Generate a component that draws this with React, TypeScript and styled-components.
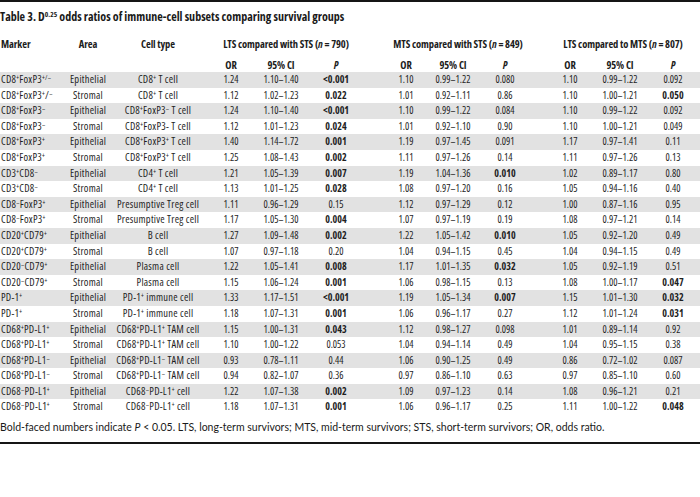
import React from "react";
import styled, { createGlobalStyle } from "styled-components";

const GlobalStyle = createGlobalStyle`
  html, body { margin: 0; padding: 0; background: #ffffff; }
  body { font-family: "Open Sans", "Liberation Sans", Arial, sans-serif; color: #1a1a1a; }
`;

const COLS = "62px 52px 88px 58px 42px 68px 72px 22px 82px 48px 52px 54px";
const SANS = `"Open Sans", "Liberation Sans", Arial, sans-serif`;

const Page = styled.div`
  width: 700px;
  display: flex;
  flex-direction: column;
`;

const Rule = styled.div<{ $top?: number }>`
  height: 2px;
  background: #151515;
  margin-top: ${(p) => p.$top ?? 0}px;
`;

const Title = styled.h1`
  margin: 7px 0 0 0;
  font-family: ${SANS};
  font-stretch: 77%;
  font-size: 12px;
  line-height: 15px;
  font-weight: 700;
  color: #1a1a1a;
  white-space: nowrap;
`;

const Table = styled.div`
  display: flex;
  flex-direction: column;
  margin-top: 13px;
  font-family: ${SANS};
  font-stretch: 75%;
`;

const HeadRow = styled.div<{ $height: number; $gap?: number }>`
  display: grid;
  grid-template-columns: ${COLS};
  height: ${(p) => p.$height}px;
  line-height: ${(p) => p.$height}px;
  margin-top: ${(p) => p.$gap ?? 0}px;
  font-size: 10.5px;
  font-weight: 700;
  letter-spacing: -0.1px;
  color: #1c1c1c;
`;

const Row = styled.div<{ $shaded: boolean }>`
  display: grid;
  grid-template-columns: ${COLS};
  height: 15.6px;
  line-height: 15.6px;
  font-size: 10px;
  background: ${(p) => (p.$shaded ? "#e2e2e2" : "transparent")};
  color: #1e1e1e;
`;

const Cell = styled.div<{ $left?: boolean; $bold?: boolean; $span?: number; $label?: boolean }>`
  display: flex;
  align-items: center;
  justify-content: ${(p) => (p.$left ? "flex-start" : "center")};
  padding-left: ${(p) => (p.$left ? "1px" : "0")};
  min-width: 0;
  white-space: nowrap;
  font-weight: ${(p) => (p.$bold ? 700 : "inherit")};
  grid-column: ${(p) => (p.$span ? `span ${p.$span}` : "auto")};
  ${(p) => (p.$label ? "font-size: 10.5px; letter-spacing: 0.25px;" : "")}
`;

const Text = styled.span`
  flex-shrink: 0;
`;

const Sup = styled.sup`
  font-size: 0.62em;
  line-height: 0;
  vertical-align: 0.5em;
`;

const Note = styled.p`
  margin: 4.5px 0 0 0;
  font-family: Lato, "Liberation Sans", sans-serif;
  font-size: 10.5px;
  line-height: 15px;
  color: #1a1a1a;
  white-space: nowrap;
`;

function Rich({ s }: { s: string }) {
  const parts = s.split(/(\^\{[^}]*\})/g).filter((x) => x.length > 0);
  return (
    <>
      {parts.map((p, i) =>
        p.startsWith("^{") ? <Sup key={i}>{p.slice(2, -1)}</Sup> : <React.Fragment key={i}>{p}</React.Fragment>
      )}
    </>
  );
}

type Stat = [string, string, string, boolean];
type DataRow = { marker: string; area: string; cell: string; stats: Stat[] };

const r = (
  marker: string,
  area: string,
  cell: string,
  a: Stat,
  b: Stat,
  c: Stat
): DataRow => ({ marker, area, cell, stats: [a, b, c] });

const ROWS: DataRow[] = [
  r("CD8^{+}FoxP3^{+/–}", "Epithelial", "CD8^{+} T cell", ["1.24", "1.10–1.40", "<0.001", true], ["1.10", "0.99–1.22", "0.080", false], ["1.10", "0.99–1.22", "0.092", false]),
  r("CD8^{+}FoxP3^{+}/^{–}", "Stromal", "CD8^{+} T cell", ["1.12", "1.02–1.23", "0.022", true], ["1.01", "0.92–1.11", "0.86", false], ["1.10", "1.00–1.21", "0.050", true]),
  r("CD8^{+}FoxP3^{–}", "Epithelial", "CD8^{+}FoxP3^{–} T cell", ["1.24", "1.10–1.40", "<0.001", true], ["1.10", "0.99–1.22", "0.084", false], ["1.10", "0.99–1.22", "0.092", false]),
  r("CD8^{+}FoxP3^{–}", "Stromal", "CD8^{+}FoxP3- T cell", ["1.12", "1.01–1.23", "0.024", true], ["1.01", "0.92–1.10", "0.90", false], ["1.10", "1.00–1.21", "0.049", false]),
  r("CD8^{+}FoxP3^{+}", "Epithelial", "CD8^{+}FoxP3^{+} T cell", ["1.40", "1.14–1.72", "0.001", true], ["1.19", "0.97–1.45", "0.091", false], ["1.17", "0.97–1.41", "0.11", false]),
  r("CD8^{+}FoxP3^{+}", "Stromal", "CD8^{+}FoxP3^{+} T cell", ["1.25", "1.08–1.43", "0.002", true], ["1.11", "0.97–1.26", "0.14", false], ["1.11", "0.97–1.26", "0.13", false]),
  r("CD3^{+}CD8^{–}", "Epithelial", "CD4^{+} T cell", ["1.21", "1.05–1.39", "0.007", true], ["1.19", "1.04–1.36", "0.010", true], ["1.02", "0.89–1.17", "0.80", false]),
  r("CD3^{+}CD8^{–}", "Stromal", "CD4^{+} T cell", ["1.13", "1.01–1.25", "0.028", true], ["1.08", "0.97–1.20", "0.16", false], ["1.05", "0.94–1.16", "0.40", false]),
  r("CD8^{–}FoxP3^{+}", "Epithelial", "Presumptive Treg cell", ["1.11", "0.96–1.29", "0.15", false], ["1.12", "0.97–1.29", "0.12", false], ["1.00", "0.87–1.16", "0.95", false]),
  r("CD8^{–}FoxP3^{+}", "Stromal", "Presumptive Treg cell", ["1.17", "1.05–1.30", "0.004", true], ["1.07", "0.97–1.19", "0.19", false], ["1.08", "0.97–1.21", "0.14", false]),
  r("CD20^{+}CD79^{+}", "Epithelial", "B cell", ["1.27", "1.09–1.48", "0.002", true], ["1.22", "1.05–1.42", "0.010", true], ["1.05", "0.92–1.20", "0.49", false]),
  r("CD20^{+}CD79^{+}", "Stromal", "B cell", ["1.07", "0.97–1.18", "0.20", false], ["1.04", "0.94–1.15", "0.45", false], ["1.04", "0.94–1.15", "0.49", false]),
  r("CD20^{–}CD79^{+}", "Epithelial", "Plasma cell", ["1.22", "1.05–1.41", "0.008", true], ["1.17", "1.01–1.35", "0.032", true], ["1.05", "0.92–1.19", "0.51", false]),
  r("CD20^{–}CD79^{+}", "Stromal", "Plasma cell", ["1.15", "1.06–1.24", "0.001", true], ["1.06", "0.98–1.15", "0.13", false], ["1.08", "1.00–1.17", "0.047", true]),
  r("PD-1^{+}", "Epithelial", "PD-1^{+} immune cell", ["1.33", "1.17–1.51", "<0.001", true], ["1.19", "1.05–1.34", "0.007", true], ["1.15", "1.01–1.30", "0.032", true]),
  r("PD-1^{+}", "Stromal", "PD-1^{+} immune cell", ["1.18", "1.07–1.31", "0.001", true], ["1.06", "0.96–1.17", "0.27", false], ["1.12", "1.01–1.24", "0.031", true]),
  r("CD68^{+}PD-L1^{+}", "Epithelial", "CD68^{+}PD-L1^{+} TAM cell", ["1.15", "1.00–1.31", "0.043", true], ["1.12", "0.98–1.27", "0.098", false], ["1.01", "0.89–1.14", "0.92", false]),
  r("CD68^{+}PD-L1^{+}", "Stromal", "CD68^{+}PD-L1^{+} TAM cell", ["1.10", "1.00–1.22", "0.053", false], ["1.04", "0.94–1.14", "0.49", false], ["1.04", "0.95–1.15", "0.38", false]),
  r("CD68^{+}PD-L1^{–}", "Epithelial", "CD68^{+}PD-L1^{–} TAM cell", ["0.93", "0.78–1.11", "0.44", false], ["1.06", "0.90–1.25", "0.49", false], ["0.86", "0.72–1.02", "0.087", false]),
  r("CD68^{+}PD-L1^{–}", "Stromal", "CD68^{+}PD-L1^{–} TAM cell", ["0.94", "0.82–1.07", "0.36", false], ["0.97", "0.86–1.10", "0.63", false], ["0.97", "0.85–1.10", "0.60", false]),
  r("CD68^{–}PD-L1^{+}", "Epithelial", "CD68^{–}PD-L1^{+} cell", ["1.22", "1.07–1.38", "0.002", true], ["1.09", "0.97–1.23", "0.14", false], ["1.08", "0.96–1.21", "0.21", false]),
  r("CD68^{–}PD-L1^{+}", "Stromal", "CD68^{–}PD-L1^{+} cell", ["1.18", "1.07–1.31", "0.001", true], ["1.06", "0.96–1.17", "0.25", false], ["1.11", "1.00–1.22", "0.048", true]),
];

const GROUPS: [string, string][] = [
  ["LTS compared with STS", "790"],
  ["MTS compared with STS", "849"],
  ["LTS compared to MTS", "807"],
];

export default function App() {
  return (
    <>
      <GlobalStyle />
      <Page>
        <Rule />
        <Title>
          Table 3. D<Sup>0.25</Sup> odds ratios of immune-cell subsets comparing survival groups
        </Title>
        <Table>
          <HeadRow $height={15}>
            <Cell $left>
              <Text>Marker</Text>
            </Cell>
            <Cell>
              <Text>Area</Text>
            </Cell>
            <Cell>
              <Text>Cell type</Text>
            </Cell>
            {GROUPS.map(([label, n]) => (
              <Cell key={label} $span={3}>
                <Text>
                  {label} (<i>n</i> = {n})
                </Text>
              </Cell>
            ))}
          </HeadRow>
          <HeadRow $height={13} $gap={7}>
            <Cell />
            <Cell />
            <Cell />
            {GROUPS.map(([label]) => (
              <React.Fragment key={label}>
                <Cell>
                  <Text>OR</Text>
                </Cell>
                <Cell>
                  <Text>95% CI</Text>
                </Cell>
                <Cell>
                  <Text>
                    <i>P</i>
                  </Text>
                </Cell>
              </React.Fragment>
            ))}
          </HeadRow>
          {ROWS.map((row, i) => (
            <Row key={i} $shaded={i % 2 === 0}>
              <Cell $left $label>
                <Text>
                  <Rich s={row.marker} />
                </Text>
              </Cell>
              <Cell $label>
                <Text>{row.area}</Text>
              </Cell>
              <Cell $label>
                <Text>
                  <Rich s={row.cell} />
                </Text>
              </Cell>
              {row.stats.map(([or, ci, p, bold], j) => (
                <React.Fragment key={j}>
                  <Cell>
                    <Text>{or}</Text>
                  </Cell>
                  <Cell>
                    <Text>{ci}</Text>
                  </Cell>
                  <Cell $bold={bold}>
                    <Text>{p}</Text>
                  </Cell>
                </React.Fragment>
              ))}
            </Row>
          ))}
        </Table>
        <Note>
          Bold-faced numbers indicate <i>P</i> &lt; 0.05. LTS, long-term survivors; MTS, mid-term survivors; STS,
          short-term survivors; OR, odds ratio.
        </Note>
        <Rule $top={7} />
      </Page>
    </>
  );
}
